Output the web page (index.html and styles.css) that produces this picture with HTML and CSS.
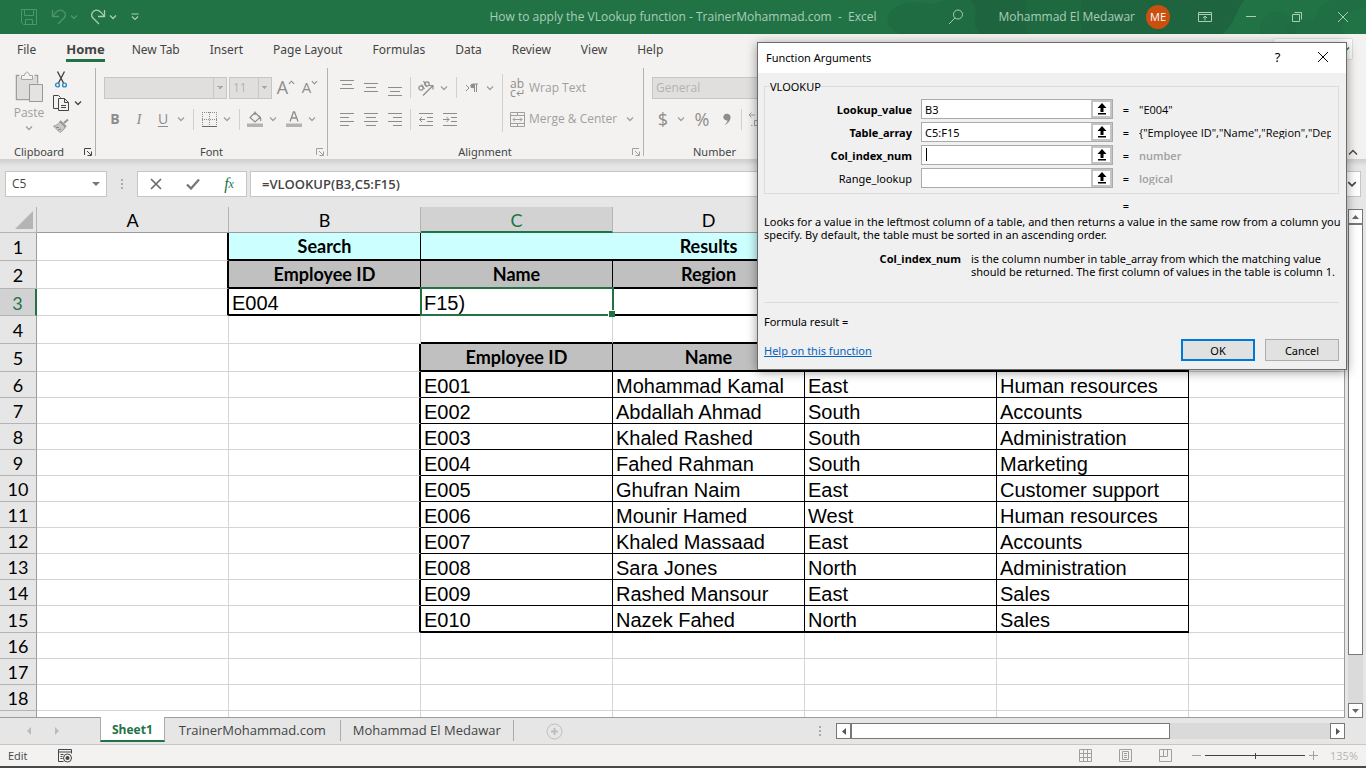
FILE: index.html
```html
<!DOCTYPE html>
<html lang="en">
<head>
<meta charset="utf-8">
<title>How to apply the VLookup function - TrainerMohammad.com - Excel</title>
<link rel="stylesheet" href="styles.css">
</head>
<body>
<svg class="defs" aria-hidden="true">
  <symbol id="chev" viewBox="0 0 8 8"><path d="M1 2.5 4 5.5 7 2.5" fill="none" stroke="currentColor" stroke-width="1.3"/></symbol>
  <symbol id="launch" viewBox="0 0 8 8"><path d="M.5 7V.5H7M3 3l4 4M7.5 3.5v4h-4" fill="none" stroke="currentColor"/></symbol>
  <symbol id="up" viewBox="0 0 10 12"><path d="M5 0 9.500 5H6.500v4h-3V5H.5zM1 10h8v1.500H1z" fill="#000"/></symbol>
</svg>

<header class="titlebar">
  <svg class="pattern" viewBox="0 0 480 34" preserveAspectRatio="xMaxYMid slice" aria-hidden="true"><g fill="#1d5e3b"><path d="M2 16C6 2 30 0 46 4L60 0H140V34H14C4 30 0 24 2 16z" opacity=".3"/><path d="M84 0H358C350 10 348 26 336 34H96C80 24 98 12 84 0z" opacity=".45"/><path d="M195 0H358C350 10 348 26 336 34H195z" opacity=".3"/><circle cx="392" cy="30" r="18" opacity=".2"/><path d="M400 34c-4-14 18-20 28-12 2-14 10-22 22-22h30v8c-20 0-26 14-22 26z" opacity=".2"/></g></svg>
  <div class="quick">
    <button class="dim" aria-label="Save"><svg width="16" height="16" viewBox="0 0 16 16"><path d="M.5.500h15v15H2.500l-2-2zM3.500.5v6h9v-6M4.500 15.500v-5h7v5" fill="none" stroke="currentColor"/></svg></button>
    <button class="dim" aria-label="Undo"><svg width="16" height="18" viewBox="0 0 16 18"><path d="M1.500 2v6.500H8M2 8C5 3 9 1 12 3s3 5 1 7l-6 6" fill="none" stroke="currentColor" stroke-width="1.300"/></svg></button>
    <button class="arrow dim" aria-label="Undo list"><svg width="8" height="8"><use href="#chev"/></svg></button>
    <button aria-label="Redo"><svg width="16" height="18" viewBox="0 0 16 18"><path d="M14.500 2v6.500H8M14 8C11 3 7 1 4 3S1 8 3 10l6 6" fill="none" stroke="currentColor" stroke-width="1.300"/></svg></button>
    <button class="arrow" aria-label="Redo list"><svg width="8" height="8"><use href="#chev"/></svg></button>
    <button aria-label="Customize"><svg width="8" height="8" viewBox="0 0 8 8"><path d="M.5 1h7M1 3.500l3 3 3-3" fill="none" stroke="currentColor" stroke-width="1.200"/></svg></button>
  </div>
  <div class="doc-title">How to apply the VLookup function - TrainerMohammad.com &nbsp;-&nbsp; Excel</div>
  <div class="account">
    <button class="search" aria-label="Search"><svg width="16" height="16" viewBox="0 0 16 16"><circle cx="10" cy="5.500" r="4.500" fill="none" stroke="currentColor"/><path d="M7 9l-6 6" stroke="currentColor"/></svg></button>
    <span class="user">Mohammad El Medawar</span>
    <span class="avatar">ME</span>
    <button class="win" aria-label="Ribbon display options"><svg width="14" height="12" viewBox="0 0 14 12"><path d="M.5 1.500h13v9H.5zM.5 3.500h13M7 9.500V5M5 7l2-2 2 2" fill="none" stroke="currentColor"/></svg></button>
    <button class="win" aria-label="Minimize"><svg width="10" height="10"><path d="M0 4.500h10" stroke="currentColor"/></svg></button>
    <button class="win" aria-label="Restore"><svg width="10" height="10"><path d="M.5 2.500h7v7h-7zM2.500.500h7v7" fill="none" stroke="currentColor"/></svg></button>
    <button class="win" aria-label="Close"><svg width="10" height="10"><path d="M0 0l10 10M10 0 0 10" stroke="currentColor"/></svg></button>
  </div>
</header>

<nav class="tabs">
  <a href="#">File</a><a href="#" class="on">Home</a><a href="#">New Tab</a><a href="#">Insert</a><a href="#">Page Layout</a><a href="#">Formulas</a><a href="#">Data</a><a href="#">Review</a><a href="#">View</a><a href="#">Help</a>
  <button class="share" aria-label="Share"><svg width="8" height="8"><use href="#chev"/></svg></button>
</nav>

<section class="ribbon">
  <div class="group clip">
    <div class="body">
      <button class="paste"><svg width="28" height="32" viewBox="0 0 28 32"><path d="M4.500 4.500h-3v24h14M19.500 4.500h3v8" fill="none" stroke="#a19f9d" stroke-width="1.500"/><path d="M3 6h18v7h-6v14H3z" fill="#dedcda"/><path d="M6.500 8.500v-4h3C10 0 14 0 14.500 4.500h3v4z" fill="#f3f2f1" stroke="#a8a6a4"/><path d="M14.500 13.500h13v17h-13z" fill="#e4e3e2" stroke="#9a9896"/></svg><span>Paste</span><svg width="8" height="8"><use href="#chev"/></svg></button>
      <div class="side">
        <button aria-label="Cut"><svg width="16" height="17" viewBox="0 0 16 17"><path d="M4.500.5l6 11.500M11.500.5l-6 11.500" stroke="#444" stroke-width="1.400"/><g fill="none" stroke="#2b88c9" stroke-width="1.400"><circle cx="4.500" cy="14" r="1.900"/><circle cx="11.500" cy="14" r="1.900"/></g></svg></button>
        <button aria-label="Copy" class="dark"><svg width="16" height="16" viewBox="0 0 16 16"><path d="M5 13.500H.5v-13h5l2 2M5.500 3.500h6l4 4v8h-10zM11.500 3.500v4h4M8 10.500h5M8 12.500h5" fill="none" stroke="currentColor"/></svg><svg width="8" height="8"><use href="#chev"/></svg></button>
        <button aria-label="Format Painter"><svg width="16" height="15" viewBox="0 0 16 15"><path d="M15 1.500 11 5M7 3l6 6" fill="none" stroke="#999" stroke-width="2.200"/><path d="M7 4l5 5c-1 3-3 4-5 5.500L.5 8C3 8 5 6 7 4z" fill="#c9c7c5" stroke="#999"/><path d="M3 9.500h3M5 12l3-1" stroke="#888"/></svg></button>
      </div>
    </div>
    <footer><span>Clipboard</span><button aria-label="Clipboard settings" class="dark"><svg width="8" height="8"><use href="#launch"/></svg></button></footer>
  </div>

  <div class="group font">
    <div class="body rows">
      <div class="row">
        <select class="combo face" aria-label="Font" disabled><option></option></select>
        <select class="combo size" aria-label="Font size" disabled><option>11</option></select>
        <button class="tool grow" aria-label="Grow font"><span class="big">A</span><svg width="7" height="7" viewBox="0 0 8 8"><path d="M1 5.500 4 2.500 7 5.500" fill="none" stroke="currentColor" stroke-width="1.300"/></svg></button>
        <button class="tool grow" aria-label="Shrink font"><span>A</span><svg width="7" height="7"><use href="#chev"/></svg></button>
      </div>
      <div class="row letters">
        <button class="tool b">B</button><button class="tool i">I</button><button class="tool u">U</button><button class="drop" aria-label="Underline styles"><svg width="8" height="8"><use href="#chev"/></svg></button>
        <i class="sep"></i>
        <button class="tool" aria-label="Borders"><svg width="15" height="15" viewBox="0 0 15 15"><path d="M0 .5h15M.5 0v15M14.500 0v15M7.500 0v15M0 7.500h15" stroke="currentColor" stroke-dasharray="1 1"/><path d="M0 14.500h15" stroke="#666"/></svg></button><button class="drop" aria-label="Border styles"><svg width="8" height="8"><use href="#chev"/></svg></button>
        <i class="sep"></i>
        <button class="tool" aria-label="Fill colour"><svg width="16" height="16" viewBox="0 0 16 16"><path d="M8 1.500l5 5-5 4.500-5-4.500zM8 4V.5M12 5c2 1 2 3 1.500 5" fill="none" stroke="currentColor" stroke-width="1.200"/><path d="M0 12.500h16v3.500H0z" fill="#b5b3b1"/></svg></button><button class="drop" aria-label="Fill colours"><svg width="8" height="8"><use href="#chev"/></svg></button>
        <button class="tool after" aria-label="Font colour"><svg width="16" height="16" viewBox="0 0 16 16"><path d="M4 10.500 7.500 1h1L12 10.500M5.500 7h5" fill="none" stroke="currentColor" stroke-width="1.300"/><path d="M0 12.500h16v3.500H0z" fill="#b5b3b1"/></svg></button><button class="drop" aria-label="Font colours"><svg width="8" height="8"><use href="#chev"/></svg></button>
      </div>
    </div>
    <footer><span>Font</span><button aria-label="Font settings"><svg width="8" height="8"><use href="#launch"/></svg></button></footer>
  </div>

  <div class="group align">
    <div class="body">
      <div class="rows">
        <div class="row">
          <button class="tool" aria-label="Top align"><svg width="14" height="16"><path d="M0 .5h14M2 4.500h10M0 8.500h14" stroke="currentColor"/></svg></button>
          <button class="tool" aria-label="Middle align"><svg width="14" height="16"><path d="M0 3.500h14M2 7.500h10M0 11.500h14" stroke="currentColor"/></svg></button>
          <button class="tool" aria-label="Bottom align"><svg width="14" height="16"><path d="M0 7.500h14M2 11.500h10M0 15.500h14" stroke="currentColor"/></svg></button>
          <i class="sep even"></i>
          <button class="tool" aria-label="Orientation"><svg width="18" height="16" viewBox="0 0 18 16"><g fill="none" stroke="currentColor" stroke-width="1.200"><circle cx="4" cy="8" r="2.200"/><path d="M4.500 4.500l3 4.500M6.500 1l3.500 6M6 15.500 16 5.500M12 5.500h4v4"/><circle cx="10" cy="4" r="2.200"/></g></svg></button><button class="drop" aria-label="Orientation list"><svg width="8" height="8"><use href="#chev"/></svg></button>
          <i class="sep"></i>
          <button class="tool" aria-label="Text direction"><svg width="14" height="10" viewBox="0 0 14 10"><path d="M1 2l3 3-3 3M9.500 1v8M11.500 1v8M8 1h5" fill="none" stroke="currentColor"/><circle cx="7.500" cy="3" r="2.200" fill="currentColor"/></svg></button><button class="drop" aria-label="Text direction list"><svg width="8" height="8"><use href="#chev"/></svg></button>
        </div>
        <div class="row">
          <button class="tool" aria-label="Align left"><svg width="14" height="13"><path d="M0 .5h14M0 4.500h9M0 8.500h14M0 12.500h9" stroke="currentColor"/></svg></button>
          <button class="tool" aria-label="Centre"><svg width="14" height="13"><path d="M0 .5h14M2 4.500h10M0 8.500h14M2 12.500h10" stroke="currentColor"/></svg></button>
          <button class="tool" aria-label="Align right"><svg width="14" height="13"><path d="M0 .5h14M5 4.500h9M0 8.500h14M5 12.500h9" stroke="currentColor"/></svg></button>
          <i class="sep even"></i>
          <button class="tool" aria-label="Decrease indent"><svg width="14" height="13"><path d="M0 .5h14M8 4.500h6M8 8.500h6M0 12.500h14M6 6.500H.500M3 4 .5 6.500 3 9" fill="none" stroke="currentColor"/></svg></button>
          <button class="tool" aria-label="Increase indent"><svg width="14" height="13"><path d="M0 .5h14M8 4.500h6M8 8.500h6M0 12.500h14M0 6.500h6M3.500 4 6 6.500 3.500 9" fill="none" stroke="currentColor"/></svg></button>
        </div>
      </div>
      <i class="sep tall"></i>
      <div class="rows">
        <button class="wide"><span class="abc"><span>ab</span><span>c<svg width="8" height="7" viewBox="0 0 8 7"><path d="M7 0v3.500H1M3.500 1 1 3.500 3.500 6" fill="none" stroke="currentColor"/></svg></span></span>Wrap Text</button>
        <button class="wide"><svg width="15" height="15" viewBox="0 0 15 15"><path d="M.5.500h14v14H.5zM.5 3.500h14M.5 11.500h14M7.500.5v3M7.500 11.500v3M3 7.500h9M5 5.500l-2 2 2 2M10 5.500l2 2-2 2" fill="none" stroke="currentColor"/></svg>Merge &amp; Center<svg class="tail" width="8" height="8"><use href="#chev"/></svg></button>
      </div>
    </div>
    <footer><span>Alignment</span><button aria-label="Alignment settings"><svg width="8" height="8"><use href="#launch"/></svg></button></footer>
  </div>

  <div class="group number">
    <div class="body rows">
      <div class="row"><select class="combo format" aria-label="Number format" disabled><option>General</option></select></div>
      <div class="row signs"><button class="tool">$</button><button class="drop" aria-label="Currencies"><svg width="8" height="8"><use href="#chev"/></svg></button><button class="tool pct">%</button><button class="tool" aria-label="Comma style"><svg width="8" height="13" viewBox="0 0 9 13"><path d="M4 0a4 4 0 0 1 4.500 4c0 4-3 7-6 8.500L2 12c2-1.500 3-3 3-4.500A3.800 3.800 0 1 1 4 0z" fill="currentColor"/></svg></button><i class="sep first"></i><button class="decimal" aria-label="Increase decimal"><svg width="16" height="15" viewBox="0 0 16 15"><path d="M7 3H1M3.500.5 1 3l2.500 2.500M3 13.500h1.500M6.500 8.500h3v5h-3z" fill="none" stroke="currentColor"/></svg></button></div>
    </div>
    <footer><span>Number</span></footer>
  </div>
  <button class="collapse" aria-label="Collapse ribbon"><svg width="10" height="8" viewBox="0 0 10 8"><path d="M1 6.500l4-4 4 4" fill="none" stroke="currentColor" stroke-width="1.300"/></svg></button>
</section>

<section class="formula">
  <div class="namebox"><input aria-label="Name box" value="C5"><button aria-label="Names"><svg width="8" height="4"><path d="M0 0h8L4 4z" fill="#777"/></svg></button></div>
  <svg class="dots" width="2" height="12"><path d="M1 1v2M1 5v2M1 9v2" stroke="#aaa" stroke-width="2"/></svg>
  <div class="fxbox">
    <button aria-label="Cancel entry"><svg width="12" height="12"><path d="M1 1l10 10M11 1 1 11" stroke="#666" stroke-width="1.600"/></svg></button>
    <button aria-label="Enter"><svg width="14" height="12"><path d="M1 6.500 5 10.500 13 1.500" fill="none" stroke="#777" stroke-width="2.300"/></svg></button>
    <button aria-label="Insert function" class="fx">f<sub>x</sub></button>
  </div>
  <div class="entry"><input aria-label="Formula" value="=VLOOKUP(B3,C5:F15)"><button aria-label="Expand formula bar"><svg width="10" height="10" viewBox="0 0 8 8"><use href="#chev"/></svg></button></div>
</section>

<main class="sheet">
  <div class="gridwrap">
  <table class="grid">
    <colgroup><col class="cn"><col class="cw"><col class="cw"><col class="cw"><col class="cw"><col class="cw"><col class="cw"><col></colgroup>
    <thead><tr><th class="corner"><svg width="18" height="18"><path d="M18 0v18H0z" fill="#b4b4b4"/></svg></th><th>A</th><th>B</th><th class="sel">C</th><th>D</th><th>E</th><th>F</th><th></th></tr></thead>
    <tbody>
      <tr class="h28"><th>1</th><td class="kr2"></td><td class="find kb2 kr">Search</td><td class="find kb2 kr" colspan="3">Results</td><td></td><td></td></tr>
      <tr class="h28"><th>2</th><td class="kr2"></td><td class="head kb2 kr">Employee ID</td><td class="head kb2 kr">Name</td><td class="head kb2 kr">Region</td><td class="head kb2 kr"></td><td></td><td></td></tr>
      <tr class="h27"><th class="sel">3</th><td class="kr2"></td><td class="kb2 kr">E004</td><td class="kb2 kr active">F15)</td><td class="kb2 kr"></td><td class="kb2 kr"></td><td></td><td></td></tr>
      <tr class="h28"><th>4</th><td></td><td></td><td class="kb2"></td><td class="kb2"></td><td class="kb2"></td><td class="kb2"></td><td></td></tr>
      <tr class="h28 rec"><th>5</th><td></td><td></td><td class="head kb2">Employee ID</td><td class="head kb2">Name</td><td class="head kb2"></td><td class="head kb2"></td><td></td></tr>
      <tr class="rec"><th>6</th><td></td><td></td><td>E001</td><td>Mohammad Kamal</td><td>East</td><td>Human resources</td><td></td></tr>
      <tr class="rec"><th>7</th><td></td><td></td><td>E002</td><td>Abdallah Ahmad</td><td>South</td><td>Accounts</td><td></td></tr>
      <tr class="rec"><th>8</th><td></td><td></td><td>E003</td><td>Khaled Rashed</td><td>South</td><td>Administration</td><td></td></tr>
      <tr class="rec"><th>9</th><td></td><td></td><td>E004</td><td>Fahed Rahman</td><td>South</td><td>Marketing</td><td></td></tr>
      <tr class="rec"><th>10</th><td></td><td></td><td>E005</td><td>Ghufran Naim</td><td>East</td><td>Customer support</td><td></td></tr>
      <tr class="rec"><th>11</th><td></td><td></td><td>E006</td><td>Mounir Hamed</td><td>West</td><td>Human resources</td><td></td></tr>
      <tr class="rec"><th>12</th><td></td><td></td><td>E007</td><td>Khaled Massaad</td><td>East</td><td>Accounts</td><td></td></tr>
      <tr class="rec"><th>13</th><td></td><td></td><td>E008</td><td>Sara Jones</td><td>North</td><td>Administration</td><td></td></tr>
      <tr class="rec"><th>14</th><td></td><td></td><td>E009</td><td>Rashed Mansour</td><td>East</td><td>Sales</td><td></td></tr>
      <tr class="h27 rec last"><th>15</th><td></td><td></td><td>E010</td><td>Nazek Fahed</td><td>North</td><td>Sales</td><td></td></tr>
      <tr><th>16</th><td></td><td></td><td></td><td></td><td></td><td></td><td></td></tr>
      <tr><th>17</th><td></td><td></td><td></td><td></td><td></td><td></td><td></td></tr>
      <tr><th>18</th><td></td><td></td><td></td><td></td><td></td><td></td><td></td></tr>
      <tr><th></th><td></td><td></td><td></td><td></td><td></td><td></td><td></td></tr>
    </tbody>
  </table>
  </div>
  <div class="vscroll">
    <button aria-label="Scroll up"><svg width="7" height="4"><path d="M0 4h7L3.500 0z" fill="#666"/></svg></button>
    <div class="track"><div class="thumb"></div></div>
    <button aria-label="Scroll down"><svg width="7" height="4"><path d="M0 0h7L3.500 4z" fill="#666"/></svg></button>
  </div>
</main>

<section class="sheetbar">
  <div class="arrows"><button aria-label="Previous sheet"><svg width="4" height="8"><path d="M4 0v8L0 4z" fill="#bbb"/></svg></button><button aria-label="Next sheet"><svg width="4" height="8"><path d="M0 0v8l4-4z" fill="#bbb"/></svg></button></div>
  <a href="#" class="on">Sheet1</a><a href="#">TrainerMohammad.com</a><a href="#">Mohammad El Medawar</a>
  <button class="add" aria-label="New sheet"><svg width="17" height="17"><circle cx="8.500" cy="8.500" r="7.500" fill="none" stroke="#bebebe"/><path d="M8.500 5v7M5 8.500h7" stroke="#bebebe" stroke-width="2"/></svg></button>
  <svg class="grip" width="2" height="12"><path d="M1 1v2M1 5v2M1 9v2" stroke="#aaa" stroke-width="2"/></svg>
  <div class="hscroll">
    <button aria-label="Scroll left"><svg width="4" height="7"><path d="M4 0v7L0 3.500z" fill="#555"/></svg></button>
    <div class="track"><div class="thumb"></div></div>
    <button aria-label="Scroll right"><svg width="4" height="7"><path d="M0 0v7l4-3.500z" fill="#555"/></svg></button>
  </div>
</section>

<footer class="status">
  <span class="mode">Edit</span>
  <svg width="15" height="14" viewBox="0 0 15 14"><path d="M.5.500h13v4M.5.5v12h5M.5 3h13M2.500 5.500h3M2.500 7.500h2M2.500 9.500h2" fill="none" stroke="#444"/><circle cx="9.500" cy="9" r="4" fill="none" stroke="#444"/><circle cx="9.500" cy="9" r="2" fill="#444"/></svg>
  <div class="views">
    <button aria-label="Normal view"><svg width="13" height="13"><path d="M.5.500h12v12H.5zM4.500.5v12M8.500.5v12M.5 4.500h12M.5 8.500h12" fill="none" stroke="currentColor"/></svg></button>
    <button aria-label="Page layout view"><svg width="13" height="13"><path d="M.5.500h12v12H.5zM3.500 2.500h6v8h-6zM5 4.500h3M5 6.500h3M5 8.500h3" fill="none" stroke="currentColor"/></svg></button>
    <button aria-label="Page break view"><svg width="13" height="13"><path d="M.5.500h12v12H.5zM4.500.5v6.500M8.500.5v6.500M.5 7.500h8" fill="none" stroke="currentColor"/></svg></button>
  </div>
  <button class="zoombtn" aria-label="Zoom out"><svg width="9" height="9"><path d="M0 4.500h9" stroke="currentColor"/></svg></button>
  <input class="zoom" type="range" aria-label="Zoom" min="0" max="100" value="50">
  <button class="zoombtn" aria-label="Zoom in"><svg width="9" height="9"><path d="M0 4.500h9M4.500 0v9" stroke="currentColor"/></svg></button>
  <span class="percent">135%</span>
</footer>

<div class="dialog" role="dialog" aria-labelledby="dlg-title">
  <div class="dlg-bar"><h1 id="dlg-title">Function Arguments</h1><button aria-label="Help">?</button><button aria-label="Close"><svg width="10" height="10"><path d="M0 0l10 10M10 0 0 10" stroke="#000"/></svg></button></div>
  <div class="dlg-body">
    <fieldset>
      <legend>VLOOKUP</legend>
      <div class="arg"><label for="a1"><b>Lookup_value</b></label><div class="ref"><input id="a1" value="B3"><button aria-label="Pick range"><svg width="10" height="12"><use href="#up"/></svg></button></div><span>=</span><output>"E004"</output></div>
      <div class="arg"><label for="a2"><b>Table_array</b></label><div class="ref"><input id="a2" value="C5:F15"><button aria-label="Pick range"><svg width="10" height="12"><use href="#up"/></svg></button></div><span>=</span><output>{"Employee ID","Name","Region","Depa</output></div>
      <div class="arg"><label for="a3"><b>Col_index_num</b></label><div class="ref caret"><input id="a3"><button aria-label="Pick range"><svg width="10" height="12"><use href="#up"/></svg></button></div><span>=</span><output class="hint">number</output></div>
      <div class="arg"><label for="a4">Range_lookup</label><div class="ref"><input id="a4"><button aria-label="Pick range"><svg width="10" height="12"><use href="#up"/></svg></button></div><span>=</span><output class="hint">logical</output></div>
    </fieldset>
    <div class="arg total"><span>=</span></div>
    <p class="about">Looks for a value in the leftmost column of a table, and then returns a value in the same row from a column you specify. By default, the table must be sorted in an ascending order.</p>
    <div class="detail"><b>Col_index_num</b><p>is the column number in table_array from which the matching value should be returned. The first column of values in the table is column 1.</p></div>
    <p class="result">Formula result =</p>
    <div class="actions"><a href="#">Help on this function</a><button class="ok">OK</button><button>Cancel</button></div>
  </div>
</div>
</body>
</html>
```
FILE: styles.css
```css
* { box-sizing: border-box; }
html, body { height: 100%; }
body {
  margin: 0;
  display: flex;
  flex-direction: column;
  overflow: hidden;
  font: 12px/16px "Open Sans", "Noto Sans", sans-serif;
  color: #444;
  background: #e6e6e6;
  border-bottom: 2px solid #484848;
}
button, input, select { font: inherit; color: inherit; margin: 0; padding: 0; border: 0; background: none; border-radius: 0; outline: 0; }
button { display: inline-flex; align-items: center; justify-content: center; }
svg { display: block; flex: none; }
a { color: inherit; text-decoration: none; }
p, h1 { margin: 0; font-size: inherit; font-weight: normal; }
.defs { position: absolute; width: 0; height: 0; }
.dark { color: #444; }

/* Title bar */
.titlebar {
  position: relative;
  height: 34px;
  flex: none;
  display: grid;
  grid-template-columns: 1fr auto 1fr;
  align-items: center;
  background: #217346;
  color: #a9cdb8;
}
.pattern { position: absolute; right: 0; top: 0; width: 480px; height: 34px; }
.quick { display: flex; align-items: center; padding-left: 21px; }
.quick button { margin-right: 14px; }
.quick button:nth-child(2), .quick button:nth-child(4) { margin-right: 3px; }
.quick .arrow { margin-right: 12px; }
.quick .arrow:nth-child(5) { margin-right: 14px; }
.quick .dim { color: #4f9470; }
.doc-title { position: relative; }
.account { position: relative; display: flex; align-items: center; justify-content: flex-end; }
.search { margin-right: 34px; }
.avatar { width: 24px; height: 24px; margin: 0 12px 0 11px; border-radius: 50%; background: #ca5010; color: #fff; font-size: 11px; line-height: 24px; text-align: center; }
.win { width: 46px; height: 30px; }

/* Ribbon tabs */
.tabs { flex: none; height: 34px; display: flex; align-items: flex-start; padding: 6px 13px 0 17px; gap: 30px; background: #f3f2f1; font-family: "Noto Sans", sans-serif; line-height: 19px; }
.tabs a { height: 22px; white-space: nowrap; }
.tabs .on { font-size: 13px; font-weight: bold; margin-right: -3px; border-bottom: 3px solid #217346; }
.share { width: 80px; height: 22px; margin: -2px 0 0 auto; justify-content: flex-end; padding-right: 2px; border: 1px solid #e1dfdd; background: #fff; border-radius: 2px; color: #217346; }

/* Ribbon */
.ribbon { flex: none; height: 92px; display: flex; background: #f3f2f1; color: #a19f9d; border-bottom: 1px solid #d2d0ce; }
.group { display: flex; flex-direction: column; height: 88px; border-right: 1px solid #b3b0ad; }
.group .body { flex: 1; display: flex; }
.group footer { display: grid; grid-template-columns: 1fr auto 1fr; align-items: center; height: 16px; margin-bottom: -4px; color: #444; font-family: "Noto Sans", sans-serif; font-size: 11px; }
.group footer span { grid-column: 2; }
.group footer button { justify-self: end; margin-right: 3px; color: #a19f9d; }
.group footer .dark { color: #444; }
.clip { width: 96px; }
.clip .body { padding: 3px 0 0 12px; }
.clip footer { grid-template-columns: 1fr 17px; padding-left: 14px; }
.clip footer span { grid-column: 1; }
.paste { width: 34px; flex-direction: column; justify-content: flex-start; }
.paste span { margin: 2px 0 3px; }
.side { display: flex; flex-direction: column; align-items: flex-start; gap: 7px; margin-left: 7px; }
.side .dark { gap: 5px; }
.font { width: 232px; padding-left: 8px; }
.font footer, .align footer { margin-left: -8px; }
.rows { display: flex; flex-direction: column; gap: 8px; padding-top: 8px; }
.group .rows { flex-direction: column; }
.row { display: flex; align-items: center; height: 23px; }
.row + .row { height: 24px; }
.combo { appearance: none; height: 22px; border: 1px solid #c8c6c4; background: #e1dfdd; color: #b5b3b1; padding: 0 3px; opacity: 1; background-repeat: no-repeat; }
.face, .size { background-image: linear-gradient(#c8c6c4, #c8c6c4), linear-gradient(45deg, transparent 50%, #aaa8a6 50%), linear-gradient(-45deg, transparent 50%, #aaa8a6 50%); background-size: 1px 22px, 3px 3px, 3px 3px; background-position: right 12px top, right 6px center, right 3px center; }
.face { width: 123px; margin-right: 2px; }
.size { width: 43px; }
.tool { width: 24px; height: 24px; color: #8f8d8b; }
.drop { width: 12px; height: 24px; }
.grow { width: 20px; align-items: flex-start; font-size: 15px; line-height: 22px; margin-left: 4px; }
.grow .big { font-size: 18px; }
.grow svg { margin-top: 3px; }
.letters { margin-left: -1px; }
.b { font-weight: bold; font-size: 14px; }
.i { font: italic 15px "Liberation Serif", serif; }
.u { font-size: 14px; text-decoration: underline; text-underline-offset: 2px; }
.sep { width: 1px; height: 21px; background: #d2d0ce; margin: 0 3px 0 6px; flex: none; }
.sep.even { margin: 0 3px; }
.sep.tall { height: 58px; margin: 6px 7px 0 6px; }
.after { margin-left: 3px; }
.align { width: 316px; padding-left: 7px; }
.wide { height: 23px; gap: 4px; justify-content: flex-start; white-space: nowrap; }
.wide + .wide { height: 24px; }
.abc { width: 15px; display: flex; flex-direction: column; line-height: 10px; text-align: left; color: #8f8d8b; }
.abc span { display: flex; align-items: flex-end; height: 9px; line-height: 9px; }
.tail { margin-left: 5px; }
.number { flex: 1; border: 0; padding-left: 8px; }
.format { width: 118px; }
.signs .tool { font-size: 18px; width: 22px; }
.signs .drop { width: 14px; }
.signs .pct { width: 28px; }
.signs .sep { margin: 0 6px 0 3px; }
.number footer { grid-template-columns: auto; padding-left: 41px; }
.number footer span { grid-column: 1; }
.collapse { align-self: flex-end; width: 26px; height: 14px; color: #444; }

/* Formula bar */
.formula { flex: none; height: 47px; display: flex; align-items: flex-start; padding: 11px 5px 0; background: linear-gradient(#d0d0d0, #e6e6e6 6px); }
.formula > div { height: 26px; display: flex; align-items: center; background: #fff; border: 1px solid #c6c6c6; }
.namebox { width: 102px; padding: 0 6px; }
.namebox input { flex: 1; min-width: 0; }
.dots { margin: 7px 14px 0; }
.fxbox { width: 110px; justify-content: space-around; }
.fx { font: italic 16px "Liberation Serif", serif; color: #217346; }
.fx sub { font-size: 12px; }
.entry { flex: 1; margin-left: 3px; padding-left: 11px; }
.entry input { flex: 1; font-weight: 600; font-size: 13px; }
.entry button { width: 17px; }

/* Worksheet */
.sheet { flex: 1; min-height: 0; display: flex; }
.gridwrap { flex: 1; overflow: hidden; border-right: 1px solid #9b9b9b; border-bottom: 1px solid #9b9b9b; }
.grid { width: 100%; table-layout: fixed; border-collapse: separate; border-spacing: 0; background: #fff; color: #000; font: 20px/22px "Liberation Sans", Arial, sans-serif; }
.cn { width: 37px; }
.cw { width: 192px; }
.grid tr { height: 26px; }
.grid .h27 { height: 27px; }
.grid .h28 { height: 28px; }
.grid th { padding: 1px 0 0; background: #e6e6e6; border: solid #b4b4b4; border-width: 0 1px 1px 0; font: 18px/20px Lato, sans-serif; }
.grid thead th { border-bottom-color: #9b9b9b; }
.grid tbody th { border-right-color: #9b9b9b; }
.grid .corner { padding: 3px 3px 3px 15px; border-color: #b4b4b4; }
.grid th.sel { background: #d2d2d2; color: #217346; }
.grid thead .sel { border-bottom: 2px solid #217346; }
.grid tbody th.sel { border-right: 2px solid #217346; }
.grid td { padding: 2px 0 0 3px; border: solid #d4d4d4; border-width: 0 1px 1px 0; white-space: nowrap; }
.grid tr > :last-child { border-right: 0; }
.grid td.find, .grid td.head { padding: 0; text-align: center; font: bold 18px/22px Lato, sans-serif; background: #c0c0c0; }
.grid td.find { background: #ccffff; }
.grid td.kr { border-right: 1px solid #000; }
.grid td.kr2 { border-right: 2px solid #000; }
.grid td.kb2 { border-bottom: 2px solid #000; }
.rec td:nth-child(3) { border-right: 2px solid #000; }
.rec td:nth-child(n+4):nth-child(-n+7) { border-right-color: #000; border-bottom-color: #000; }
.last td:nth-child(n+4):nth-child(-n+7) { border-bottom-width: 2px; }
.active { position: relative; }
.active::before { content: ""; position: absolute; inset: -2px -2px -2px -1px; border: 2px solid #217346; }
.active::after { content: ""; position: absolute; right: -3px; bottom: -3px; width: 6px; height: 6px; background: #217346; border: solid #fff; border-width: 1px 0 0 1px; }
.vscroll { width: 21px; padding: 2px 3px 0; display: flex; flex-direction: column; }
.vscroll button { height: 15px; border: 1px solid #777; background: #fff; }
.track { flex: 1; background: #dadada; }
.thumb { background: #fff; border: 1px solid #777; }
.vscroll .thumb { height: 90%; }

/* Sheet tabs */
.sheetbar { flex: none; height: 27px; display: flex; align-items: center; font-size: 13px; border-bottom: 1px solid #c6c6c6; }
.arrows { width: 100px; display: flex; gap: 24px; padding-left: 27px; }
.sheetbar a { align-self: flex-start; height: 21px; margin-top: 2px; line-height: 20px; padding: 0 14px; border-right: 1px solid #ababab; white-space: nowrap; }
.sheetbar a:last-of-type { padding: 0 12px; }
.sheetbar .on { height: 25px; margin-top: -1px; padding: 0 11px; line-height: 26px; background: #fff; border: solid #ababab; border-width: 0 1px; border-bottom: 2px solid #217346; color: #217346; font-weight: bold; font-size: 12px; position: relative; }
.add { margin-left: 32px; }
.grip { margin-left: auto; margin-right: 15px; }
.hscroll { width: 509px; height: 16px; margin-right: 21px; display: flex; }
.hscroll button { width: 15px; border: 1px solid #777; background: #fff; }
.hscroll .thumb { width: 319px; height: 100%; }

/* Status bar */
.status { flex: none; height: 21px; display: flex; align-items: center; padding: 0 8px; background: #f3f2f1; font-size: 11px; }
.mode { width: 50px; }
.views { display: flex; gap: 27px; margin-left: auto; margin-right: 20px; color: #a19f9d; }
.zoombtn { color: #a19f9d; }
.zoom { appearance: none; width: 100px; height: 12px; margin: 0 4px; background: linear-gradient(#444, #444) center / 100% 1px no-repeat; }
.zoom::-webkit-slider-thumb { appearance: none; width: 1px; height: 6px; background: #444; }
.percent { width: 40px; text-align: right; color: #b5b3b1; }

/* Function dialog */
.dialog { position: absolute; top: 42px; right: 19px; width: 590px; background: #f0f0f0; border: 1px solid #6b6b6b; box-shadow: 0 2px 10px rgba(0,0,0,.4); color: #000; font-family: "Noto Sans", sans-serif; font-size: 11px; line-height: 13px; }
.dlg-bar { display: flex; align-items: center; height: 30px; padding: 0 1px 2px 8px; background: #fff; }
.dlg-bar h1 { flex: 1; }
.dlg-bar button { width: 45px; height: 28px; font-size: 13px; }
.dlg-body { padding: 7px 7px 8px 6px; }
fieldset { margin: 0; padding: 6px 7px 2px; min-width: 0; border: 1px solid #dcdcdc; }
legend { padding: 0; margin-left: -2px; }
.arg { display: grid; grid-template-columns: 140px 201px 26px minmax(0, 1fr); align-items: center; height: 20px; margin-bottom: 3px; }
.arg label { text-align: right; }
.arg > span { text-align: center; }
.ref { position: relative; display: flex; height: 20px; margin-left: 9px; border: 1px solid #ababab; background: #fff; }
.ref input { flex: 1; min-width: 0; padding-left: 3px; }
.ref button { width: 21px; border: 2px solid #c4c4c4; background: #fff; }
.ref.caret::before { content: ""; position: absolute; left: 4px; top: 2px; width: 1px; height: 13px; background: #000; }
output { overflow: hidden; white-space: nowrap; font-family: "Open Sans", sans-serif; }
.hint { color: #a0a0a0; font-weight: 600; }
.total { padding-left: 8px; height: 13px; margin: 5px 0 3px; }
.total span { grid-column: 3; }
.about { margin-right: -5px; }
.detail { display: flex; justify-content: flex-end; gap: 10px; margin-top: 11px; padding-bottom: 24px; border-bottom: 1px solid #dcdcdc; }
.detail p { width: 368px; }
.result { margin-top: 12px; }
.actions { display: flex; align-items: center; gap: 10px; margin-top: 11px; }
.actions a { margin-right: auto; color: #0563c1; text-decoration: underline; }
.actions button { width: 74px; height: 22px; background: #e1e1e1; border: 1px solid #adadad; }
.actions .ok { border: 2px solid #0078d7; }
```
